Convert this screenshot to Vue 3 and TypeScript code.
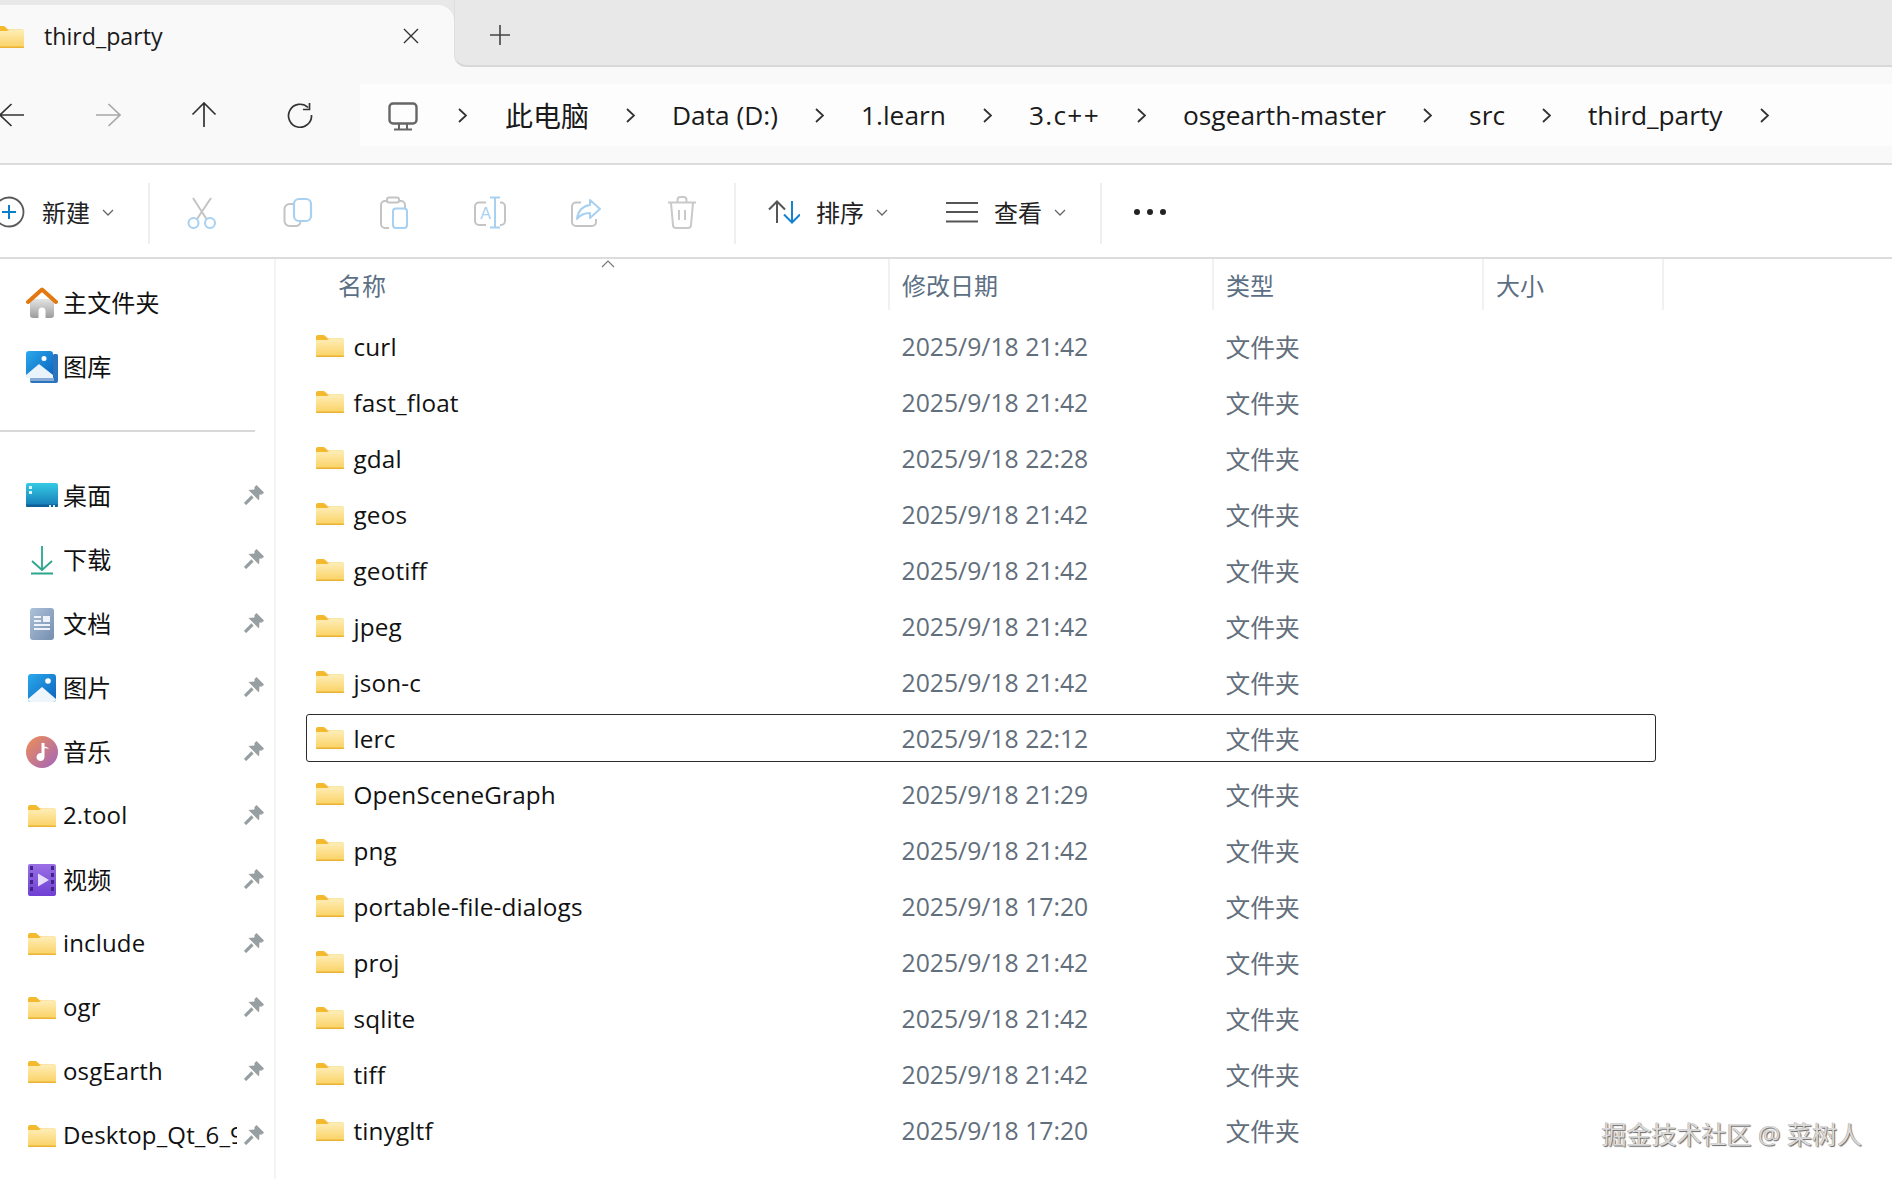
<template>
  <div class="explorer">
    <!-- shared gradients and icons -->
    <svg class="defs" aria-hidden="true">
      <defs>
        <linearGradient id="g-folder" x1="0" y1="0" x2="0" y2="1">
          <stop offset="0" stop-color="#fdeeb8" />
          <stop offset="1" stop-color="#fbd162" />
        </linearGradient>
        <linearGradient id="g-home" x1="0" y1="0" x2="0" y2="1">
          <stop offset="0" stop-color="#e4e4e4" />
          <stop offset="1" stop-color="#9c9c9c" />
        </linearGradient>
        <linearGradient id="g-pic" x1="0" y1="0" x2="1" y2="1">
          <stop offset="0" stop-color="#2aa9ec" />
          <stop offset="1" stop-color="#0b62bd" />
        </linearGradient>
        <linearGradient id="g-desk" x1="0" y1="0" x2="0" y2="1">
          <stop offset="0" stop-color="#35cbe4" />
          <stop offset="1" stop-color="#1478b6" />
        </linearGradient>
        <linearGradient id="g-doc" x1="0" y1="0" x2="1" y2="1">
          <stop offset="0" stop-color="#adc1da" />
          <stop offset="1" stop-color="#758eaf" />
        </linearGradient>
        <linearGradient id="g-music" x1="0" y1="0" x2="1" y2="1">
          <stop offset="0" stop-color="#f08f55" />
          <stop offset="1" stop-color="#a164bd" />
        </linearGradient>
        <linearGradient id="g-video" x1="0" y1="0" x2="0" y2="1">
          <stop offset="0" stop-color="#9a6fe6" />
          <stop offset="1" stop-color="#6f3fd3" />
        </linearGradient>
      </defs>
      <symbol id="ic-folder" viewBox="0 0 28 22">
        <path d="M0 2a2 2 0 0 1 2-2h6l4 3.500h14a2 2 0 0 1 2 2V8H0z" fill="#f4b92c" />
        <path d="M0 5h11l3-1.500h12.500A1.500 1.500 0 0 1 28 5v15.500a1.500 1.500 0 0 1-1.500 1.500h-25A1.500 1.500 0 0 1 0 20.500z" fill="url(#g-folder)" />
        <rect x="0" y="20.500" width="28" height="1.500" rx=".7" fill="#eab334" />
      </symbol>
      <symbol id="ic-home" viewBox="0 0 32 32">
        <rect x="4" y="12" width="24" height="19" rx="3" fill="url(#g-home)" />
        <path d="M12.500 31v-7a3.500 3.500 0 0 1 7 0v7z" fill="#fff" />
        <path d="M2 15 16 2.500 30 15" fill="none" stroke="#e2780f" stroke-width="4" stroke-linecap="round" stroke-linejoin="round" />
      </symbol>
      <symbol id="ic-gallery" viewBox="0 0 32 32">
        <path d="M28 3h2.500A1.500 1.500 0 0 1 32 4.500V30a2 2 0 0 1-2 2H6a2 2 0 0 1-2-2v-2z" fill="#2a74bd" />
        <rect x="4" y="27" width="24" height="3" fill="#86abd4" />
        <rect x="0" y="0" width="27" height="27" rx="3" fill="url(#g-pic)" />
        <path d="M0 24 13 13l14 11v3H0z" fill="#e9f3fb" />
        <circle cx="18" cy="7.500" r="2.500" fill="#fff" />
      </symbol>
      <symbol id="ic-desktop" viewBox="0 0 32 32">
        <rect x="0" y="3" width="32" height="24" rx="2" fill="url(#g-desk)" />
        <rect x="0" y="24.500" width="32" height="2.500" rx="1" fill="#0f5f98" />
        <rect x="3" y="6" width="3" height="3" fill="#dff6fb" />
        <rect x="3" y="11" width="3" height="3" fill="#dff6fb" />
        <rect x="23" y="25" width="2" height="2" fill="#d6eef7" />
        <rect x="27" y="25" width="2" height="2" fill="#d6eef7" />
      </symbol>
      <symbol id="ic-down" viewBox="0 0 32 32">
        <path d="M16 2v24M6 17l10 9 10-9M5 29.500h22" fill="none" stroke="#2ba68c" stroke-width="1.800" />
      </symbol>
      <symbol id="ic-doc" viewBox="0 0 32 32">
        <rect x="4" y="0" width="24" height="32" rx="3" fill="url(#g-doc)" />
        <rect x="8" y="8" width="7" height="2" fill="#eef3f9" />
        <rect x="8" y="12" width="7" height="2" fill="#eef3f9" />
        <rect x="17" y="8" width="7" height="6" fill="#eef3f9" />
        <rect x="8" y="16" width="16" height="2" fill="#eef3f9" />
        <rect x="8" y="20" width="16" height="2" fill="#eef3f9" />
      </symbol>
      <symbol id="ic-pic" viewBox="0 0 32 32">
        <rect x="2" y="2" width="28" height="28" rx="3" fill="url(#g-pic)" />
        <path d="M2 27 16 15l14 12a3 3 0 0 1-3 3H5a3 3 0 0 1-3-3z" fill="#eef6fc" />
        <circle cx="22" cy="9" r="2.800" fill="#fff" />
      </symbol>
      <symbol id="ic-music" viewBox="0 0 32 32">
        <circle cx="16" cy="16" r="16" fill="url(#g-music)" />
        <path d="M15.500 7h3v3.500c2 .2 3.500 1 4.500 2.500-1.500-.5-3-.8-4.500-.6V21a4 4 0 1 1-3-3.800z" fill="#fff" />
      </symbol>
      <symbol id="ic-video" viewBox="0 0 32 32">
        <rect x="2" y="0" width="28" height="32" rx="2" fill="url(#g-video)" />
        <rect x="4" y="2" width="3" height="4" fill="#3f2785" />
        <rect x="4" y="9" width="3" height="4" fill="#3f2785" />
        <rect x="4" y="16" width="3" height="4" fill="#3f2785" />
        <rect x="4" y="23" width="3" height="4" fill="#3f2785" />
        <rect x="25" y="2" width="3" height="4" fill="#3f2785" />
        <rect x="25" y="9" width="3" height="4" fill="#3f2785" />
        <rect x="25" y="16" width="3" height="4" fill="#3f2785" />
        <rect x="25" y="23" width="3" height="4" fill="#3f2785" />
        <path d="M12 9.500v13L23 16z" fill="#e6dcfa" />
      </symbol>
      <symbol id="ic-pin" viewBox="0 0 20 20">
        <path d="M12.500 0 20 7.500l-2 2h-2.500L15 15.500 4.500 5l6-.5V2z" fill="#989fa3" />
        <path d="M8.500 11.500 1 19" stroke="#989fa3" stroke-width="3.200" />
      </symbol>
    </svg>

    <div class="tabbar">
      <div class="tab">
        <svg class="tab-folder"><use href="#ic-folder" /></svg>
        <span class="tab-title">third_party</span>
        <svg class="tab-close" viewBox="0 0 16 16"><path d="M1 1l14 14M15 1 1 15" stroke="#333" stroke-width="1.400" /></svg>
      </div>
      <div class="tab-rest">
        <svg class="tab-plus" viewBox="0 0 20 20"><path d="M10 0v20M0 10h20" stroke="#444" stroke-width="1.600" /></svg>
      </div>
    </div>

    <div class="navbar">
      <div class="nav-btn">
        <svg viewBox="0 0 26 24"><path d="M0.800 12H25M12.500 1 1 12l11.500 11" fill="none" stroke="#333" stroke-width="1.700" /></svg>
      </div>
      <div class="nav-btn">
        <svg viewBox="0 0 26 24"><path d="M1 12h24M13.500 1 25 12 13.500 23" fill="none" stroke="#a8a8a8" stroke-width="1.700" /></svg>
      </div>
      <div class="nav-btn">
        <svg viewBox="0 0 26 26"><path d="M13 25V1M1.500 12.500 13 1l11.500 11.500" fill="none" stroke="#333" stroke-width="1.700" /></svg>
      </div>
      <div class="nav-btn">
        <svg viewBox="0 0 26 26"><path d="M21 5.500A11.500 11.500 0 1 0 24.500 13M22.500 1v6.500H16" fill="none" stroke="#333" stroke-width="1.700" /></svg>
      </div>
      <div class="address">
        <svg class="pc" viewBox="0 0 30 29">
          <rect x="1.500" y="1.500" width="27" height="20" rx="3.500" fill="none" stroke="#666" stroke-width="2.400" />
          <path d="M11 22v5M19 22v5M6 27.500h18" stroke="#666" stroke-width="2" fill="none" />
        </svg>
        <template v-for="c in crumbs" :key="c.text">
          <svg class="crumb-sep" viewBox="0 0 9 15"><path d="M1 1l7 6.500L1 14" fill="none" stroke="#333" stroke-width="1.800" /></svg>
          <span class="crumb" :class="c.cls">{{ c.text }}</span>
        </template>
        <svg class="crumb-sep" viewBox="0 0 9 15"><path d="M1 1l7 6.500L1 14" fill="none" stroke="#333" stroke-width="1.800" /></svg>
      </div>
    </div>

    <div class="toolbar">
      <div class="tool-new">
        <svg class="ico-new" viewBox="0 0 32 32">
          <circle cx="16" cy="16" r="14.500" fill="none" stroke="#5a5a5a" stroke-width="1.800" />
          <path d="M16 9v14M9 16h14" stroke="#0a7ecb" stroke-width="2" />
        </svg>
        <span class="tool-text">新建</span>
        <svg class="caret" viewBox="0 0 12 8"><path d="M1 1l5 5 5-5" fill="none" stroke="#666" stroke-width="1.300" /></svg>
      </div>
      <div class="sep first"></div>
      <div class="icon-group">
        <svg viewBox="0 0 34 34">
          <path d="M8 3l13.500 21M26 3 12 24" stroke="#c4c4c4" stroke-width="2" fill="none" />
          <circle cx="8.500" cy="28" r="5" fill="none" stroke="#a8d0f0" stroke-width="2" />
          <circle cx="25" cy="28" r="5" fill="none" stroke="#a8d0f0" stroke-width="2" />
        </svg>
        <svg viewBox="0 0 34 34">
          <path d="M12 9H8.500a5 5 0 0 0-5 5v12a5 5 0 0 0 5 5h6a5 5 0 0 0 5-4" fill="none" stroke="#c4c4c4" stroke-width="2" />
          <rect x="13" y="4" width="17" height="22" rx="5" fill="none" stroke="#a8d0f0" stroke-width="2.200" />
        </svg>
        <svg viewBox="0 0 34 34">
          <path d="M12 33H8a4 4 0 0 1-4-4V10a4 4 0 0 1 4-4h16a4 4 0 0 1 4 4v3" fill="none" stroke="#c4c4c4" stroke-width="2" />
          <rect x="10" y="2.500" width="12" height="5" rx="2" fill="#fff" stroke="#c4c4c4" stroke-width="2" />
          <rect x="16" y="13.500" width="14" height="19.500" rx="3" fill="none" stroke="#a8d0f0" stroke-width="2" />
        </svg>
        <svg viewBox="0 0 34 34">
          <path d="M13 7.500H6a4 4 0 0 0-4 4V26a4 4 0 0 0 4 4h7M27 7.500h1a4 4 0 0 1 4 4V26a4 4 0 0 1-4 4h-1" fill="none" stroke="#c4c4c4" stroke-width="2" />
          <path d="M22 2v31M17 2.500h10M17 32.500h10" fill="none" stroke="#a8d0f0" stroke-width="2" />
          <text x="12.500" y="24" font-size="16" text-anchor="middle" fill="#a8d0f0" font-family="'Liberation Sans', sans-serif">A</text>
        </svg>
        <svg viewBox="0 0 34 34">
          <path d="M12 7.500H7a4 4 0 0 0-4 4V27a4 4 0 0 0 4 4h16a4 4 0 0 0 4-4v-3" fill="none" stroke="#c4c4c4" stroke-width="2" />
          <path d="M21 5l10 9-10 9v-5c-6 0-10 2-13 6 1-8 6-13 13-14z" fill="none" stroke="#a8d0f0" stroke-width="2" stroke-linejoin="round" />
        </svg>
        <svg viewBox="0 0 34 34">
          <path d="M3 7.500h28M12.500 7V5a3 3 0 0 1 3-3h3a3 3 0 0 1 3 3v2M6 8l2 22a3 3 0 0 0 3 3h12a3 3 0 0 0 3-3l2-22M14 15v10M20 15v10" fill="none" stroke="#c9c9c9" stroke-width="2" />
        </svg>
      </div>
      <div class="sep second"></div>
      <div class="tool-sort">
        <svg class="ico-sort" viewBox="0 0 32 24">
          <path d="M9 23V1.500M1 9.500 9 1.500l8 8" fill="none" stroke="#555" stroke-width="2" />
          <path d="M24 1v21.500M16 14.500l8 8 8-8" fill="none" stroke="#1583cf" stroke-width="2" />
        </svg>
        <span class="tool-text">排序</span>
        <svg class="caret" viewBox="0 0 12 8"><path d="M1 1l5 5 5-5" fill="none" stroke="#666" stroke-width="1.300" /></svg>
      </div>
      <div class="tool-view">
        <svg class="ico-view" viewBox="0 0 32 22">
          <path d="M0 2h32M0 11h32M0 20.500h32" stroke="#555" stroke-width="2" />
        </svg>
        <span class="tool-text">查看</span>
        <svg class="caret" viewBox="0 0 12 8"><path d="M1 1l5 5 5-5" fill="none" stroke="#666" stroke-width="1.300" /></svg>
      </div>
      <div class="sep third"></div>
      <div class="more"><i></i><i></i><i></i></div>
    </div>

    <div class="body">
      <aside class="sidebar">
        <div v-for="n in quick" :key="n.label" class="side-row">
          <span class="side-icon">
            <svg :class="n.icon === 'folder' ? 'folder-svg' : 'side-svg'"><use :href="'#ic-' + n.icon" /></svg>
          </span>
          <span class="side-label">{{ n.label }}</span>
        </div>
        <div class="side-divider"></div>
        <div v-for="n in pinned" :key="n.label" class="side-row">
          <span class="side-icon">
            <svg :class="n.icon === 'folder' ? 'folder-svg' : 'side-svg'"><use :href="'#ic-' + n.icon" /></svg>
          </span>
          <span class="side-label">{{ n.label }}</span>
          <svg class="pin"><use href="#ic-pin" /></svg>
        </div>
      </aside>

      <main class="list">
        <div class="head">
          <div class="hcell name">
            名称
            <svg class="sort-caret" viewBox="0 0 14 8"><path d="M1 7l6-6 6 6" fill="none" stroke="#777" stroke-width="1.200" /></svg>
          </div>
          <div class="hcell">修改日期</div>
          <div class="hcell">类型</div>
          <div class="hcell">大小</div>
        </div>
        <div class="rows">
          <div v-for="f in files" :key="f.name" class="row" :class="{ focused: f.name === 'lerc' }">
            <div class="cell-name">
              <svg class="folder-svg"><use href="#ic-folder" /></svg>
              <span>{{ f.name }}</span>
            </div>
            <div class="cell-meta">{{ f.date }}</div>
            <div class="cell-meta">文件夹</div>
          </div>
        </div>
        <div class="watermark">掘金技术社区 @ 菜树人</div>
      </main>
    </div>
  </div>
</template>

<script setup lang="ts">
type NavItem = { label: string; icon: string }
type FileRow = { name: string; date: string }

const crumbs = [
  { text: '此电脑', cls: 'cjk' },
  { text: 'Data (D:)', cls: '' },
  { text: '1.learn', cls: '' },
  { text: '3.c++', cls: 'wide' },
  { text: 'osgearth-master', cls: '' },
  { text: 'src', cls: '' },
  { text: 'third_party', cls: '' }
]

const quick: NavItem[] = [
  { label: '主文件夹', icon: 'home' },
  { label: '图库', icon: 'gallery' }
]

const pinned: NavItem[] = [
  { label: '桌面', icon: 'desktop' },
  { label: '下载', icon: 'down' },
  { label: '文档', icon: 'doc' },
  { label: '图片', icon: 'pic' },
  { label: '音乐', icon: 'music' },
  { label: '2.tool', icon: 'folder' },
  { label: '视频', icon: 'video' },
  { label: 'include', icon: 'folder' },
  { label: 'ogr', icon: 'folder' },
  { label: 'osgEarth', icon: 'folder' },
  { label: 'Desktop_Qt_6_9_3_MinGW', icon: 'folder' }
]

const files: FileRow[] = [
  { name: 'curl', date: '2025/9/18 21:42' },
  { name: 'fast_float', date: '2025/9/18 21:42' },
  { name: 'gdal', date: '2025/9/18 22:28' },
  { name: 'geos', date: '2025/9/18 21:42' },
  { name: 'geotiff', date: '2025/9/18 21:42' },
  { name: 'jpeg', date: '2025/9/18 21:42' },
  { name: 'json-c', date: '2025/9/18 21:42' },
  { name: 'lerc', date: '2025/9/18 22:12' },
  { name: 'OpenSceneGraph', date: '2025/9/18 21:29' },
  { name: 'png', date: '2025/9/18 21:42' },
  { name: 'portable-file-dialogs', date: '2025/9/18 17:20' },
  { name: 'proj', date: '2025/9/18 21:42' },
  { name: 'sqlite', date: '2025/9/18 21:42' },
  { name: 'tiff', date: '2025/9/18 21:42' },
  { name: 'tinygltf', date: '2025/9/18 17:20' }
]
</script>

<style>
html, body { margin: 0; background: #fff; overflow: hidden; }
</style>

<style scoped>
.explorer {
  width: 1892px;
  height: 1179px;
  overflow: hidden;
  position: relative;
  display: flex;
  flex-direction: column;
  background: #fff;
  color: #111;
  font-family: "Open Sans", "Noto Sans CJK SC", sans-serif;
  font-size: 24px;
}
.defs { display: block; width: 0; height: 0; flex: none; }

.tabbar {
  height: 67px;
  flex: none;
  display: flex;
  background: linear-gradient(#e8e8e8 40px, #f9f9f9 40px);
}
.tab {
  width: 454px;
  margin-top: 5px;
  padding-right: 35px;
  box-sizing: border-box;
  display: flex;
  align-items: center;
  background: #f9f9f9;
  border-top-right-radius: 16px;
}
.tab-folder { width: 28px; height: 22px; margin-left: -4px; margin-top: 1px; flex: none; }
.tab-title { margin-left: 20px; font-size: 23.200px; color: #1a1a1a; }
.tab-close { width: 16px; height: 16px; margin-left: auto; }
.tab-rest {
  flex: 1;
  display: flex;
  align-items: center;
  padding: 5px 0 0 35px;
  background: #e8e8e8;
  border-left: 1px solid #dedede;
  border-bottom: 2px solid #d8d8d8;
  border-bottom-left-radius: 12px;
}
.tab-plus { width: 20px; height: 20px; }

.navbar {
  height: 96px;
  flex: none;
  display: flex;
  align-items: center;
  background: #f9f9f9;
  border-bottom: 2px solid #dcdcdc;
}
.nav-btn {
  width: 96px;
  flex: none;
  display: flex;
  justify-content: center;
}
.nav-btn:first-child { margin-left: -36px; }
.nav-btn svg { width: 26px; height: 26px; }
.address {
  flex: 1;
  height: 62px;
  margin-left: 12px;
  padding-left: 28px;
  display: flex;
  align-items: center;
  gap: 37px;
  background: #fdfdfd;
}
.pc { width: 30px; height: 29px; flex: none; margin-right: 3px; margin-top: 2px; }
.crumb-sep { width: 9px; height: 15px; flex: none; margin-top: 1px; }
.crumb { font-size: 26.300px; white-space: nowrap; color: #1a1a1a; }
.crumb.cjk { font-size: 28px; margin-left: 1px; }
.crumb.wide { letter-spacing: 1.300px; }

.toolbar {
  height: 94px;
  box-sizing: border-box;
  padding-top: 4px;
  flex: none;
  display: flex;
  align-items: center;
  border-bottom: 2px solid #dcdcdc;
  background: #fff;
}
.tool-new, .tool-sort, .tool-view { display: flex; align-items: center; flex: none; }
.tool-text { font-size: 24px; color: #222; line-height: 1; }
.ico-new { width: 32px; height: 32px; margin-left: -7px; margin-right: 17px; margin-bottom: 2px; }
.caret { width: 12px; height: 8px; margin-left: 12px; }
.sep { width: 2px; height: 61px; background: #efefef; flex: none; }
.sep.first { margin-left: 34px; }
.icon-group {
  width: 584px;
  padding-left: 35px;
  margin-bottom: 2px;
  box-sizing: border-box;
  display: flex;
  gap: 62px;
  flex: none;
}
.icon-group svg { width: 34px; height: 34px; flex: none; }
.tool-sort { margin-left: 32px; }
.ico-sort { width: 32px; height: 24px; margin-right: 16px; margin-bottom: 2px; }
.tool-view { margin-left: 58px; }
.ico-view { width: 32px; height: 22px; margin-right: 16px; margin-bottom: 2px; }
.sep.third { margin-left: 34px; }
.more { display: flex; gap: 7px; margin-left: 32px; margin-bottom: 2px; }
.more i { width: 6px; height: 6px; border-radius: 50%; background: #222; display: block; }

.body { flex: 1; display: flex; min-height: 0; }
.sidebar {
  width: 274px;
  flex: none;
  padding-top: 12px;
  border-right: 2px solid #f4f4f4;
}
.side-row {
  height: 64px;
  display: flex;
  align-items: center;
  position: relative;
}
.side-icon {
  width: 32px;
  height: 32px;
  margin-left: 26px;
  margin-right: 5px;
  display: flex;
  align-items: center;
  justify-content: center;
  flex: none;
}
.side-svg { width: 32px; height: 32px; display: block; }
.folder-svg { width: 28px; height: 22px; display: block; flex: none; }
.side-label {
  width: 174px;
  margin-top: -3px;
  overflow: hidden;
  white-space: nowrap;
  font-size: 24px;
  letter-spacing: .15px;
  color: #111;
}
.pin { width: 20px; height: 20px; position: absolute; left: 244px; top: 21px; }
.side-divider { width: 255px; height: 2px; background: #d8d8d8; margin: 31px 0 32px; }

.list { flex: 1; position: relative; min-width: 0; }
.head { display: grid; grid-template-columns: 614px 324px 270px 180px; height: 51px; }
.hcell {
  display: flex;
  align-items: center;
  padding-left: 12px;
  border-right: 2px solid #f1f1f1;
  box-sizing: border-box;
  color: #5c6f85;
  font-size: 24px;
  position: relative;
}
.hcell.name { padding-left: 62px; }
.sort-caret { width: 14px; height: 8px; position: absolute; left: 325px; top: 1px; }
.rows {
  margin-left: 30px;
  padding-top: 12px;
  width: 1350px;
  display: flex;
  flex-direction: column;
  gap: 8px;
}
.row {
  height: 48px;
  box-sizing: border-box;
  border: 1.500px solid transparent;
  border-radius: 3px;
  display: grid;
  grid-template-columns: 594.500px 324px 1fr;
  align-items: center;
}
.row.focused { border-color: #2c2c2c; }
.cell-name { display: flex; align-items: center; gap: 10px; padding-left: 8.500px; }
.cell-name span { font-size: 24.300px; letter-spacing: .15px; color: #111; white-space: nowrap; }
.cell-meta { color: #626e7c; font-size: 24.750px; white-space: nowrap; }
.watermark {
  position: absolute;
  right: 30px;
  bottom: 28px;
  font-size: 25px;
  color: #dadada;
  white-space: nowrap;
  text-shadow: 1px 1px 1px rgba(0, 0, 0, 0.6), -0.5px -0.5px 0 rgba(0, 0, 0, 0.35);
}
</style>
